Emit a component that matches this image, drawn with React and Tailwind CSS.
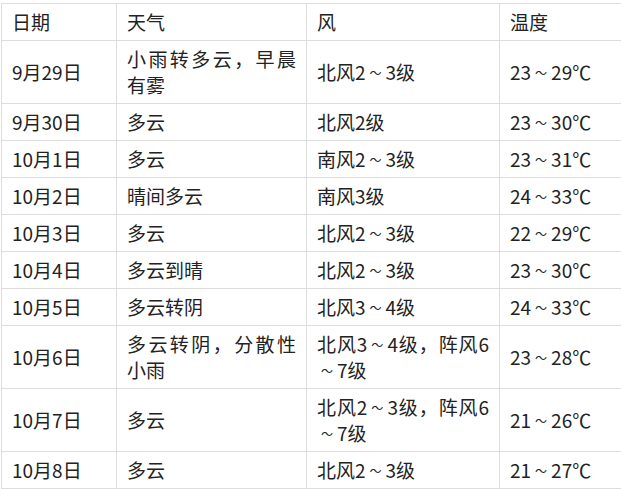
const rows = [
  ["9月29日", "小雨转多云，早晨有雾", "北风2～3级", "23～29℃"],
  ["9月30日", "多云", "北风2级", "23～30℃"],
  ["10月1日", "多云", "南风2～3级", "23～31℃"],
  ["10月2日", "晴间多云", "南风3级", "24～33℃"],
  ["10月3日", "多云", "北风2～3级", "22～29℃"],
  ["10月4日", "多云到晴", "北风2～3级", "23～30℃"],
  ["10月5日", "多云转阴", "北风3～4级", "24～33℃"],
  ["10月6日", "多云转阴，分散性小雨", "北风3～4级，阵风6～7级", "23～28℃"],
  ["10月7日", "多云", "北风2～3级，阵风6～7级", "21～26℃"],
  ["10月8日", "多云", "北风2～3级", "21～27℃"],
]

const cell = "border border-[#dddddd] px-[10px] py-[5px] align-middle text-justify"

// the wave dash is drawn small in the source font, so shrink it but keep its width
function Text({ value }) {
  const parts = value.split("～")
  return parts.map((p, i) => (
    <span key={i}>
      {i > 0 && <span className="inline-block w-[20px] text-center text-[12px] leading-none align-[2px]">～</span>}
      {p}
    </span>
  ))
}

export default function App() {
  return (
    <div className="min-h-screen bg-white pt-[3px] pl-[1px] font-['Noto_Sans_CJK_SC',sans-serif] text-[19px] leading-[26px] text-[#222222]">
      <table className="w-[620px] table-fixed border-collapse">
        <colgroup>
          <col className="w-[115px]" />
          <col className="w-[190px]" />
          <col className="w-[193px]" />
          <col className="w-[122px]" />
        </colgroup>
        <thead>
          <tr>
            <th className={cell + " font-normal text-left"}>日期</th>
            <th className={cell + " font-normal text-left"}>天气</th>
            <th className={cell + " font-normal text-left"}>风</th>
            <th className={cell + " font-normal text-left"}>温度</th>
          </tr>
        </thead>
        <tbody>
          {rows.map((r) => (
            <tr key={r[0]}>
              {r.map((v, i) => (
                <td key={i} className={cell}><Text value={v} /></td>
              ))}
            </tr>
          ))}
        </tbody>
      </table>
    </div>
  )
}
